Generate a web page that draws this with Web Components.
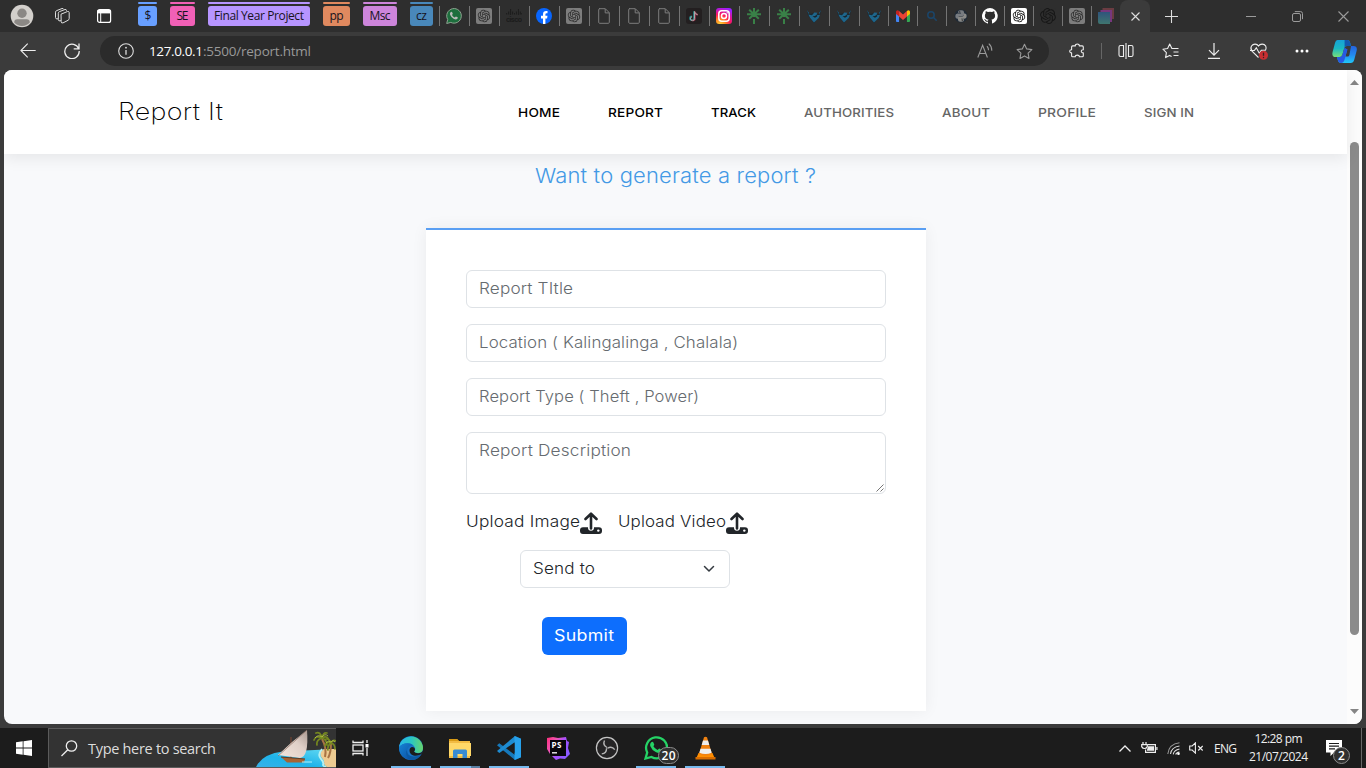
<!DOCTYPE html>
<html lang="en">
<head>
<meta charset="utf-8">
<title>Report It</title>
<style>
html,body{margin:0;height:100%;overflow:hidden;background:#3b3b3b}
body{font-family:"Open Sans","Noto Sans",sans-serif}
</style>
</head>
<body>
<desktop-screen></desktop-screen>
<script>
const KNOT="M22.2819 9.8211a5.9847 5.9847 0 0 0-.5157-4.9108 6.0462 6.0462 0 0 0-6.5098-2.9A6.0651 6.0651 0 0 0 4.9807 4.1818a5.9847 5.9847 0 0 0-3.9977 2.9 6.0462 6.0462 0 0 0 .7427 7.0966 5.98 5.98 0 0 0 .511 4.9107 6.051 6.051 0 0 0 6.5146 2.9001A5.9847 5.9847 0 0 0 13.2599 24a6.0557 6.0557 0 0 0 5.7718-4.2058 5.9894 5.9894 0 0 0 3.9977-2.9001 6.0557 6.0557 0 0 0-.7475-7.0729zm-9.022 12.6081a4.4755 4.4755 0 0 1-2.8764-1.0408l.1419-.0804 4.7783-2.7582a.7948.7948 0 0 0 .3927-.6813v-6.7369l2.02 1.1686a.071.071 0 0 1 .038.052v5.5826a4.504 4.504 0 0 1-4.4945 4.4944zm-9.6607-4.1254a4.4708 4.4708 0 0 1-.5346-3.0137l.142.0852 4.783 2.7582a.7712.7712 0 0 0 .7806 0l5.8428-3.3685v2.3324a.0804.0804 0 0 1-.0332.0615L9.74 19.9502a4.4992 4.4992 0 0 1-6.1408-1.6464zM2.3408 7.8956a4.485 4.485 0 0 1 2.3655-1.9728V11.6a.7664.7664 0 0 0 .3879.6765l5.8144 3.3543-2.0201 1.1685a.0757.0757 0 0 1-.071 0l-4.8303-2.7865A4.504 4.504 0 0 1 2.3408 7.872zm16.5963 3.8558L13.1038 8.364 15.1192 7.2a.0757.0757 0 0 1 .071 0l4.8303 2.7913a4.4944 4.4944 0 0 1-.6765 8.1042v-5.6772a.79.79 0 0 0-.407-.667zm2.0107-3.0231l-.142-.0852-4.7735-2.7818a.7759.7759 0 0 0-.7854 0L9.409 9.2297V6.8974a.0662.0662 0 0 1 .0284-.0615l4.8303-2.7866a4.4992 4.4992 0 0 1 6.6802 4.66zM8.3065 12.863l-2.02-1.1638a.0804.0804 0 0 1-.038-.0567V6.0742a4.4992 4.4992 0 0 1 7.3757-3.4537l-.142.0805L8.704 5.459a.7948.7948 0 0 0-.3927.6813zm1.0976-2.3654l2.602-1.4998 2.6069 1.4998v2.9994l-2.5974 1.4997-2.6067-1.4997Z";
const gpt=(bg,fg,k=.52)=>[16,16,`<rect width="16" height="16" rx="2" fill="${bg}"/><path transform="translate(${8-12*k} ${8-12*k}) scale(${k})" fill="${fg}" d="${KNOT}"/>`];
const doc=[12,16,'<path d="M1 .7h6.3l4 4v9.6a1 1 0 0 1-1 1H1.7a1 1 0 0 1-1-1V1.7a1 1 0 0 1 1-1zM7.2.9v4h4" fill="none" stroke="#7d7d7d"/>'];
const tree=[14,16,'<g stroke="#398047" stroke-width="2" fill="none"><path d="M7 0v9M0 6.300h14M2.200 1.800l9.600 9M11.800 1.800l-9.600 9M7 11v5"/></g>'];
const fox=[16,16,'<path d="M1 1.500L3 6l5-1 5 1 2-4.500-1 6-6 7.500-6-7.500z" fill="#1b2932"/><path d="M1 2l2 3-.5 1zM15 2l-2 3 .5 1z" fill="#1d668c"/><path d="M2.300 6.500L6 7.300l2.300-2.800 3.200.3-1 1.500 1 .9 2.500-.5-1.300 3.200L8 14.500 4.200 10z" fill="#1d668c"/><path d="M6.500 8.300l2.500-.2 1.500-1.400.8 1.600-2.300 1.500z" fill="#17242c"/>'];
const S='fill="none" stroke="currentColor" stroke-width="1.1"';
const ICONS={
avatar:[24,24,'<circle cx="12" cy="12" r="11.300" fill="#d3d0cc"/><circle cx="12" cy="9.300" r="4.700" fill="#8b8885"/><path d="M4.200 18.500q0-3.200 3.200-3.200h9.200q3.200 0 3.200 3.200a10.500 10.500 0 0 1-15.600 0z" fill="#8b8885"/>'],
spaces:[18,18,`<g ${S} stroke-linejoin="round" style="stroke-width:1"><path d="M8 7.200l6.500-2.700q1.500-.4 1.700 1v6q0 1.300-1.200 1.800L10 15.900q-1.800.5-1.800-1.200z"/><path d="M8 13.700q-2.700.9-2.700-1V6.300q0-1.200 1.200-1.700L12 2.500q1.400-.4 1.600 1.200"/><path d="M5.200 11.800Q2.500 12.500 2.500 10.500V5.200Q2.500 4 3.700 3.600L9 1.500q1.300-.3 1.700.8"/></g>`],
tabs:[16,16,`<rect x="1.600" y="1.600" width="13" height="12.800" rx="2" fill="none" stroke="#fff" stroke-width="1.200"/><path d="M1.500 2h13v3.400h-13z" fill="#fff"/><path d="M4.700 5v9" stroke="#fff"/>`],
wa:[16,16,'<path d="M.7 15.500l1-4A7.300 7.300 0 1 1 4.800 14.400z" fill="#1d6e3d" stroke="#8fa391" stroke-width="1"/><path d="M4.500 4.200q1.300-1 1.800.4l.5 1.200-.8 1.100q.8 1.700 2.700 2.600l1.200-1.100 1.700.8q.7.600-.3 1.600-1.300 1.200-3.700-.1-2.500-1.400-3.500-3.900-.5-1.600.4-2.600z" fill="#b9bab9"/>'],
gptg:gpt('#7d7d7d','#2c2c2c'),gptw:gpt('#fff','#111'),gptd:gpt('#2e2e2e','#171717',.66),
cisco:[16,14,'<g stroke="#1c1c1c" stroke-width="1"><path d="M.7 4v1.500M2.700 2.500v3M4.600 0v6M6.600 2.500v3M8.500 4v1.500M10.400 2.500v3M12.400 0v6M14.300 2.500v3M15.800 4v1.500"/></g><text x="0" y="12.500" textLength="16" font-family="Inter" font-size="7" font-weight="700" fill="#1c1c1c">cisco</text>'],
fb:[16,16,'<circle cx="8" cy="8" r="8" fill="#0866ff"/><path d="M7 16v-5.500H5V7.700h2V6.300Q7 3 10.200 3h1.300v2.300h-1Q9.400 5.300 9.400 6.500v1.200h2.100l-.4 2.800H9.400V16z" fill="#fff"/>'],
doc,tree,fox,
tiktok:[16,16,'<rect width="16" height="16" rx="3" fill="#231f20"/><g fill="none" stroke-width="1.600"><path d="M8 3.200v7.200a2 2 0 1 1-2.200-2.200M8 3.500q.4 2.600 3 2.900" stroke="#2c8e91"/><path d="M9 3.500v7.500a2 2 0 0 1-3.200 1M9 4q.5 2.500 3 2.700" stroke="#99334b"/><path d="M8.500 3.300v7.400a2 2 0 1 1-2.400-2M8.600 3.800q.4 2.500 2.900 2.800" stroke="#a9a9a9" stroke-width="1"/></g>'],
ig:[16,16,'<defs><radialGradient id="a" cx=".25" cy="1.050" r="1.100"><stop offset="0" stop-color="#ffda3c"/><stop offset=".3" stop-color="#ff8a20"/><stop offset=".6" stop-color="#ff1560"/><stop offset="1" stop-color="#9c1dff"/></radialGradient></defs><rect width="16" height="16" rx="3" fill="url(#a)"/><g fill="none" stroke="#fff" stroke-width="1.500"><rect x="2.800" y="2.800" width="10.400" height="10.400" rx="3"/><circle cx="8" cy="8" r="2.500"/></g><circle cx="11.200" cy="4.800" r=".7" fill="#fff"/>'],
gmail:[14,12,'<g transform="scale(.875 1)"><path d="M0 2h3.500v10H1a1 1 0 0 1-1-1z" fill="#4285f4"/><path d="M12.500 2H16v9a1 1 0 0 1-1 1h-2.500z" fill="#34a853"/><path d="M12.500 1Q14 0 15 .4q1 .4 1 1.600v2L12.500 6.500z" fill="#fbbc04"/><path d="M0 4V2Q0 .8 1 .4 2 0 3.500 1v5.500z" fill="#c5221f"/><path d="M3.500 1L8 4.500 12.500 1v5.500L8 10 3.500 6.500z" fill="#ea4335"/></g>'],
srch:[10,10,'<g fill="none" stroke="#1b4569" stroke-width="1.500"><circle cx="4" cy="4" r="3.200"/><path d="M6.300 6.300L9.700 9.700"/></g>'],
py:[14,14,'<g transform="scale(.875)"><circle cx="8" cy="8" r="7.500" fill="#1f2a36"/><path d="M4.500 4Q4.500 1.500 7 1.500h2q2.500 0 2.500 2.500v2.500Q11.500 8 9.500 8h-3Q5 8 5 9.800V11H3.500q-2 0-2-3t2.500-3h4v-.7H4.500z" fill="#777b80"/><path d="M11.500 12q0 2.500-2.500 2.500H7Q4.500 14.500 4.500 12V9.800Q4.500 8.500 6.500 8.500h3q1.900 0 1.900-2V5h1.100q2 0 2 3t-2.500 3H8v.7h3.500z" fill="#8a8a88"/><circle cx="6.500" cy="3.200" r=".7" fill="#222"/><circle cx="9.500" cy="12.800" r=".7" fill="#222"/></g>'],
gh:[16,16,'<path fill="#fff" d="M8 0a8 8 0 0 0-2.500 15.600c.4.100.5-.2.500-.4v-1.500c-2.200.5-2.700-1-2.700-1-.4-.900-.9-1.200-.9-1.200-.7-.5.100-.5.100-.5.800.1 1.200.8 1.200.8.700 1.300 1.900.9 2.300.7.100-.5.300-.9.500-1.100-1.800-.2-3.600-.9-3.600-4 0-.9.300-1.600.8-2.100-.1-.2-.4-1 .1-2.100 0 0 .7-.2 2.200.8a7.500 7.500 0 0 1 4 0c1.500-1 2.200-.8 2.200-.8.500 1.100.2 1.900.1 2.100.5.500.8 1.300.8 2.100 0 3.100-1.900 3.800-3.700 4 .3.300.6.800.6 1.500v2.200c0 .2.100.5.500.4A8 8 0 0 0 8 0z"/>'],
cube:[16,16,'<path d="M4.500 0H16v11h-3V4H4.500z" fill="#6b3c42"/><path d="M2.500 2H14v12h-2V5H2.500z" fill="#76377d"/><defs><linearGradient id="c" x1="0" y1="0" x2="0" y2="1"><stop stop-color="#2f547c"/><stop offset="1" stop-color="#3f766f"/></linearGradient></defs><path d="M0 4h12v12H2q-2 0-2-2z" fill="url(#c)"/>'],
x9:[9,9,`<path d="M.5.5l8 8M8.500.5l-8 8" ${S}/>`],
x11:[11,11,`<path d="M.5.5l10 10M10.500.5l-10 10" ${S}/>`],
plus:[13,13,`<path d="M6.500 0v13M0 6.500h13" ${S}/>`],
min:[10,10,`<path d="M0 5.500h10" ${S} style="stroke-width:1"/>`],
restore:[11,11,`<g ${S} style="stroke-width:1"><rect x=".5" y="2.500" width="8" height="8" rx="1.500"/><path d="M2.800.6h5.700q2 0 2 2v5.600"/></g>`],
back:[17,16,`<path d="M15.700 7.500H.9M7.700.700L.9 7.500l6.800 6.800" ${S}/>`],
reload:[16,16,`<path d="M14.800 6A7.200 7.200 0 1 0 15.200 8M15 .5v5.300H9.700" ${S} style="stroke-width:1.300"/>`],
info:[16,16,`<circle cx="8" cy="8" r="7.300" ${S}/><path d="M8 7v4.800" stroke="currentColor" stroke-width="1.300"/><circle cx="8" cy="4.700" r=".9" fill="currentColor"/>`],
aloud:[16,16,`<path d="M.8 14.500L5.600 2.200l4.800 12.300M2.300 10.500h6.600M10 3.200q1.500 1.700 1.500 4M11.800.7q3.100 2.800 3 7" ${S}/>`],
star:[17,17,`<path d="M8.500 1.200l2.200 4.700 5.200.7-3.800 3.600.9 5.200-4.500-2.500L4 15.400l.9-5.200L1.100 6.600l5.200-.7z" ${S} stroke-linejoin="round"/>`],
puzzle:[16,16,`<path d="M3.300 2.600H6C5.700.100 10.300.100 10 2.600h3q1 0 1 1v2.800c-2.700-.2-2.700 3.400 0 3.200v2.900q0 1-1 1H10c.3-2.200-4.300-2.200-4 0H3.300q-1 0-1-1V9.600C-.2 9.800-.2 6.200 2.300 6.400V3.600q0-1 1-1z" transform="translate(.3 .3)" ${S} stroke-linejoin="round"/>`],
split:[16,16,`<path d="M5.500 2.500H2.600Q1 2.500 1 4.100v7.800q0 1.600 1.600 1.600h2.900zM10.500 2.500h2.900q1.600 0 1.600 1.600v7.800q0 1.600-1.600 1.600h-2.900zM8 0v16" ${S}/>`],
favs:[17,16,`<path d="M10.800 5.500h5.700M11.500 9h5M11.500 12.500h5M10.800 5.500H9.900L7.700 1 5.600 5.500l-4.700.7 3.500 3.400-.8 5 4-2.200 2 1.100" ${S} stroke-linejoin="round"/>`],
down:[14,16,`<path d="M7 0v11.700M2 7.200l5 5 5-5M1 15.300h12" ${S} style="stroke-width:1.200"/>`],
heart:[19,17,`<path d="M9.500 14.500L3 8.200Q1 5.500 2.500 3C4.500.200 8 .700 9.500 3 11 .700 15 .200 16.700 3q.9 2-.1 4M1 7.500h4.300L7.300 4.800l3 5.500 2-3h4.500" ${S}/><circle cx="14.500" cy="12.300" r="4.500" fill="#c72f32"/><path d="M14.500 9.600v3.200" stroke="#3b2020" stroke-width="1.300"/><circle cx="14.500" cy="14.500" r=".7" fill="#3b2020"/>`],
dots:[14,4,'<g fill="#fff"><circle cx="2" cy="2" r="1.500"/><circle cx="7" cy="2" r="1.500"/><circle cx="12" cy="2" r="1.500"/></g>'],
copilot:[25,23,'<defs><linearGradient id="l" x1="0" y1="0" x2="0" y2="1"><stop stop-color="#16a2d8"/><stop offset=".5" stop-color="#1bb8c3"/><stop offset="1" stop-color="#77df77"/></linearGradient><linearGradient id="r" x1="0" y1="0" x2="0" y2="1"><stop stop-color="#2464df"/><stop offset=".5" stop-color="#2488ef"/><stop offset="1" stop-color="#20c7f8"/></linearGradient></defs><path d="M5.500 0h10q2 0 2.700 3l.6 3h-4q-2 0-2.600 2.300l-1.800 6.200q-.9 2.500-3 2.500H3.500Q-.5 17 .6 12L3 3Q3.700 0 5.500 0z" fill="url(#l)"/><path d="M12.600 0h3q2 0 2.700 3l.6 3h-4q-1.500 0-2.300 1.500z" fill="#1357ae"/><path d="M19 6h2.500q4 0 3.200 4.500l-2.400 9Q21.500 23 18.500 23H9q-2.500 0-3.200-3L5 17h3q2 0 2.500-2.300L12.600 8l2.800 1.500-2 7h2.300q1.300 0 1.700-1.500z" fill="url(#r)"/><path d="M5 17h3.500q1.400-.3 2-2.300L12.600 8l2.800 1.500-3 10.500q-.8 3-3.400 3-2.500 0-3.200-3z" fill="#2759e2"/>'],
up:[9,5,'<path d="M0 5L4.500 0 9 5z" fill="#858585"/>'],dn:[9,5,'<path d="M0 0h9L4.500 5z" fill="#858585"/>'],
upload:[22,22,'<path d="M3 15.200h5v.6a3 3 0 0 0 6 0v-.6h5a3 3 0 0 1 3 3v.8a3 3 0 0 1-3 3H3a3 3 0 0 1-3-3v-.8a3 3 0 0 1 3-3z" fill="#212529"/><circle cx="18.300" cy="18.600" r="1.200" fill="#fff"/><path d="M11 16.500V2.500M5.500 7L11 1.700 16.500 7" fill="none" stroke="#212529" stroke-width="2.600" stroke-linecap="round" stroke-linejoin="round"/>'],
chev:[12,8,'<path d="M1.500 1.500L6 6l4.500-4.500" fill="none" stroke="#343a40" stroke-width="1.500" stroke-linecap="round" stroke-linejoin="round"/>'],
grip:[9,9,'<path d="M.5 7.500l7-7M4.500 7.500l3-3" stroke="#666" stroke-width=".9"/>'],
win:[16,16,'<path d="M0 2.200L6.700 1.300v6.200H0zM7.500 1.200L16 0v7.500H7.500zM0 8.400h6.700v6.300L0 13.800zM7.500 8.400H16V16l-8.500-1.200z" fill="#fff"/>'],
find:[17,17,'<g fill="none" stroke="#eee" stroke-width="1.300"><circle cx="10.500" cy="6" r="5.200"/><path d="M6.800 9.700L.5 16"/></g>'],
task:[17,16,'<g fill="none" stroke="#eee" stroke-width="1.300"><path d="M1 .5v2h10v-2M1 15.500v-2h10v2"/><rect x="1" y="5" width="10" height="6"/><path d="M15 0v3M15 8v8"/></g><path d="M13.500 4h3v3.500h-3z" fill="#fff"/>'],
beach:[80,40,'<defs><linearGradient id="s" x1="0" x2="1" y1="1" y2="0"><stop stop-color="#3bb0e8"/><stop offset=".4" stop-color="#1fb4ea"/><stop offset="1" stop-color="#68dcf2"/></linearGradient><linearGradient id="t" x1="0" y1="1" x2="1" y2="0"><stop stop-color="#f5e6dd"/><stop offset=".6" stop-color="#dfcfc7"/><stop offset="1" stop-color="#a99890"/></linearGradient></defs><path d="M0 39Q6 26 27 23.500L80 21v19H0z" fill="url(#s)"/><path d="M80 21H68q-6 4-2 9 3 3 2 6 1 2 3 3h9z" fill="#edcb91"/><path d="M66 21q-5 6-1 10 3 3 2 6 0 1 3 2" fill="none" stroke="#b5f0f2" stroke-width="1.800"/><path d="M35 9v22" stroke="#714332" stroke-width="1.200"/><path d="M51 2Q53 29 44 30L22 27Q35 14 51 2z" fill="url(#t)"/><path d="M22 28L51 2" stroke="#8a6c60" stroke-width=".7"/><path d="M25 29l24 2-1 3.500H31z" fill="#a76434"/><path d="M25 29l24 2" stroke="#603b24" stroke-width="1.200"/><path d="M46 34h10" stroke="#b3f1fa"/><path d="M66 11q5 9 3 18M75 15q0 10-3 15" fill="none" stroke="#a87444" stroke-width="2"/><g fill="none" stroke="#75871f" stroke-width="1.700" stroke-linecap="round"><path d="M66 10Q60 7 58 12M66 10q-6 2-5 7M66 10Q64 3 60 5M66 10q1-6 5-5M66 10q5-3 7 2M66 10q5 2 5 7M75 15q-5-2-6 3M75 15q-4 3-3 7M75 15q-2-5-5-4M75 15q2-4 5-2M75 15q4 1 4 6"/></g><g fill="none" stroke="#b9c84f" stroke-width=".8"><path d="M66 9q-4-3-7 1M66 9q3-4 6-1M75 14q2-3 4 0M75 14q-3-2-5 1"/></g>'],
edge:[24,24,'<defs><linearGradient id="a"><stop stop-color="#29b7e8"/><stop offset=".5" stop-color="#29c6c4"/><stop offset="1" stop-color="#67d46c"/></linearGradient><linearGradient id="b" y2="1"><stop stop-color="#1683d5"/><stop offset="1" stop-color="#0b4da1"/></linearGradient></defs><circle cx="12" cy="12" r="12" fill="#1872c6"/><path d="M.1 11A12 12 0 0 1 24 12q0 5-5 5-3 0-4-1.300 2-1.700.7-4.500-2-4-7.200-4Q3 7.200.1 11z" fill="url(#a)"/><path d="M.1 11Q3 7.200 8.500 7.200q3.500 0 5.500 2Q9 9.500 8 15q0 6 6 8.700A12 12 0 0 1 .1 11z" fill="url(#b)"/><path d="M8 14q0 6 6.500 6.500 4.500.2 8.200-2.500Q19 24 13 24 7 22 7 16z" fill="#0c59a4"/><path d="M15 15.500q1 2 4.500 1.800 2.500 0 4.500-2.300L22.500 18q-4 2.500-8 1.500-4-1.500-4-5 0-3 2.500-3.500 3 0 3 2.500 0 1.100-1 2z" fill="#1c1c1c"/>'],
folder:[22,20,'<path d="M0 3q0-2 1-2h7l2 2h11v17H0z" fill="#f2bb43"/><path d="M0 5h22v13H0z" fill="#ffd868"/><path d="M0 1h8l2 2H0z" fill="#d99b15"/><path d="M4 20v-7q0-1.500 1.500-1.500h11Q18 11.500 18 13v7h-4.500v-4h-5v4z" fill="#398bd1"/>'],
code:[24,24,'<path d="M18 0l6 2.800v18.400L18 24 0 9.200 2.300 7.300 18 19z" fill="#1679bb"/><path d="M0 15L18 0v6L2.300 17z" fill="#1e8cd2"/><path d="M17.500 0L24 2.800v18.400L17.500 24z" fill="#27a1eb"/><path d="M17.500 7v10l-6.500-5z" fill="#1c1c1c"/>'],
ps:[24,24,'<defs><linearGradient id="p" x2="1" y2=".6"><stop stop-color="#ff2e7a"/><stop offset=".35" stop-color="#f055b5"/><stop offset=".6" stop-color="#a94fff"/><stop offset="1" stop-color="#8a5cff"/></linearGradient></defs><path d="M1 2l6-1 5 1 8-1 1 4 2 1-1 6 2 6-5 5-5-.5-4 1.500-6-6-3-5z" fill="url(#p)"/><path d="M4 4h16v16H4z" fill="#08070b"/><path d="M6 16.800h5" stroke="#eee" stroke-width="1.400"/><text x="5.500" y="12" textLength="10" font-family="Open Sans" font-size="8" font-weight="700" fill="#fff">PS</text>'],
obs:[24,24,'<circle cx="12" cy="12" r="10.600" fill="#252425" stroke="#c4c4c4" stroke-width="1.200"/><g fill="none" stroke="#b5b5b5" stroke-width="1.400"><path d="M12 11.500Q7.500 9 9.500 4.500"/><path d="M12 11.500Q7.500 9 9.500 4.500" transform="rotate(120 12 12)"/><path d="M12 11.500Q7.500 9 9.500 4.500" transform="rotate(240 12 12)"/></g>'],
wabig:[24,24,'<path d="M1.500 22.500l1.700-6A10.500 10.500 0 1 1 7.500 21z" fill="#1c1c1c" stroke="#25d366" stroke-width="2.300"/><path d="M7 6.500q1.700-1.400 2.500.2l.8 2-.9 1.600q1.400 2.600 4.100 3.600l1.700-1.500 2.600 1.300q.6.800-.4 2-1.900 2-5.700.2-4-2-5.500-6-.5-2.200.8-3.400z" fill="#25d366"/>'],
vlc:[21,24,'<path d="M3.500 17h14l2.500 6H1z" fill="#ff8e00"/><path d="M.5 21h20v2.500H.5z" fill="#d86c00"/><path d="M9 1.200q1.500-1 3 0L17 18q-6.500 3.500-13 0z" fill="#f18211"/><path d="M8 4.500h5l1.300 4.500H6.700zM5.500 12.800h10l1.200 4q-6.200 2.500-12.400 0z" fill="#eee"/>'],
chup:[12,7,'<path d="M.5 6.500L6 1l5.500 5.500" fill="none" stroke="#eee" stroke-width="1.300"/>'],
batt:[17,12,'<g fill="none" stroke="#eee" stroke-width="1.200"><path d="M7 2.600h7.400v7.800H4.600V7.500"/><path d="M15.900 5v3M2 0v2.500M5 0v2.500M.7 2.600h5.600v2q-1 1.900-2.800 1.900T.7 4.600z"/></g><path d="M7.200 4.200H13v4.600H6V7.500z" fill="#eee"/>'],
wifi:[13,13,'<g fill="none" stroke="#ddd" stroke-width="1.100"><path d="M.8 12Q2 2 12.500.8" stroke="#999"/><path d="M3.500 12q1-7 9-8"/><path d="M6.200 12.300Q7 8 12.500 7"/><path d="M8.700 12.500Q9.300 10.300 12.500 10"/></g><circle cx="11.500" cy="11.700" r="1.300" fill="#fff"/>'],
vol:[15,12,'<path d="M.7 4h2.500L6.400.900v10.200L3.200 8H.7z" fill="none" stroke="#eee" stroke-width="1.100"/><path d="M9.200 4l4.500 4.500M13.700 4L9.200 8.500" stroke="#eee" stroke-width="1.100"/>'],
note:[16,16,'<path d="M0 0h16v12.500H8L4.500 16v-3.500H0z" fill="#fff"/><path d="M3 3.500h10M3 6.200h10M3 8.900h6" stroke="#1c1c1c" stroke-width="1.200"/>']
};
function define(name,html,init){
  const t=document.createElement('template');t.innerHTML=html;
  customElements.define(name,class extends HTMLElement{
    constructor(){super();this.attachShadow({mode:'open'}).append(t.content.cloneNode(true))}
    connectedCallback(){if(init)init(this,this.shadowRoot)}
  });
}
/* vector icon chosen by name */
define('ui-icon','<style>:host{display:inline-flex;flex:none}svg{display:block}</style><span></span>',(h,r)=>{
  const [w,ht,b]=ICONS[h.getAttribute('name')];
  r.querySelector('span').innerHTML=`<svg width="${w}" height="${ht}" viewBox="0 0 ${w} ${ht}">${b}</svg>`;
});
/* single line of text set to a given measure */
define('fit-text','<style>:host{display:block;flex:none;white-space:nowrap}span{display:inline-block;transform-origin:0 50%;vertical-align:top}</style><span></span>',(h,r)=>{
  const s=r.querySelector('span'),w=+h.getAttribute('w'),t=h.getAttribute('text');
  s.textContent=t;
  const n=s.getBoundingClientRect().width,k=h.hasAttribute('plain')?1:Math.pow(w/n,.85);
  s.style.letterSpacing=(w/k-n)/Math.max(1,t.length-1)+'px';
  if(k!==1)s.style.transform=`scaleX(${k})`;
  h.style.width=w+'px';
});
define('tab-group',`<style>:host{display:block;height:26px;padding-top:2px;box-sizing:border-box;width:var(--w);color:#16131d;font-size:12px}
i{display:block;height:2px;background:var(--c);margin-bottom:2px;border-radius:1px}div{height:20px;border-radius:3px;background:var(--c);display:flex;align-items:center;justify-content:center;padding-bottom:1px;box-sizing:border-box}</style><i></i><div><slot></slot></div>`);
define('pinned-tab','<style>:host{display:flex;align-items:center;justify-content:center;height:20px;width:29px;border-left:1px solid #747474;box-sizing:border-box;flex:none}:host([wide]){width:30px;padding-right:1px}</style><slot></slot>');
define('window-cell','<style>:host{display:flex;align-items:center;justify-content:center;flex:none;height:100%;width:var(--w,44px)}</style><slot></slot>');
const tabs=['wa','gptg','cisco','fb','gptg','doc','doc','doc','tiktok','ig','tree','tree','fox','fox','fox','gmail','srch','py','gh','gptw','gptd','gptg','cube'];
const groups=[['$',19,'#689fff',13,6],['SE',25,'#f160b6',13,12],['Final Year Project',102,'#b795ff',13,90],['pp',27,'#e0895f',13,14],['Msc',34,'#cd85db',13,21],['cz',23,'#4988ba',6,11]];
define('tab-strip',`<style>:host{display:flex;height:32px;background:#2e2e2e;color:#ddd}
.groups{display:flex;flex:none}.pins{display:flex;padding-top:6px;flex:none}
.active{width:30px;flex:none;height:32px;background:#3b3b3b;border-radius:8px 8px 0 0;display:flex;align-items:center;justify-content:center}
.controls{display:flex;margin-left:auto;color:#9b9b9b}</style>
<window-cell><ui-icon name="avatar"></ui-icon></window-cell><window-cell style="--w:36px"><ui-icon name="spaces"></ui-icon></window-cell><window-cell style="--w:48px"><ui-icon name="tabs"></ui-icon></window-cell>
<div class="groups" style="margin-left:10px">${groups.map(([t,w,c,g,m])=>`<tab-group style="--w:${w}px;--c:${c};margin-right:${g}px"><fit-text plain w="${m}" text="${t}"></fit-text></tab-group>`).join('')}</div>
<div class="pins">${tabs.map((t,i)=>`<pinned-tab${i<14?' wide':''}><ui-icon name="${t}"></ui-icon></pinned-tab>`).join('')}</div>
<div class="active"><ui-icon name="x9"></ui-icon></div><window-cell style="--w:43px"><ui-icon name="plus"></ui-icon></window-cell>
<div class="controls"><window-cell style="--w:46px"><ui-icon name="min"></ui-icon></window-cell><window-cell style="--w:46px"><ui-icon name="restore"></ui-icon></window-cell><window-cell style="--w:46px"><ui-icon name="x11"></ui-icon></window-cell></div>`);
define('address-bar',`<style>:host{display:flex;align-items:center;width:949px;height:30px;background:#2b2b2b;border-radius:15px;box-sizing:border-box;padding:0 5px 0 15px;margin:0 6px;font-size:13.500px;color:#999;flex:none}
.host{color:#fff;margin-left:12px}.right{margin-left:auto;display:flex}</style>
<window-cell style="--w:22px;color:#ddd"><ui-icon name="info"></ui-icon></window-cell><fit-text class="host" plain w="54" text="127.0.0.1"></fit-text><fit-text plain w="108" text=":5500/report.html"></fit-text>
<div class="right"><window-cell style="--w:39px"><ui-icon name="aloud"></ui-icon></window-cell><window-cell style="--w:40px"><ui-icon name="star"></ui-icon></window-cell></div>`);
define('tool-bar',`<style>:host{display:flex;align-items:center;height:38px;padding-left:6px;box-sizing:border-box;background:#3b3b3b;color:#eee}i{width:1px;height:16px;background:#666;margin:0 2px 0 2px}</style>
<window-cell><ui-icon name="back"></ui-icon></window-cell><window-cell><ui-icon name="reload"></ui-icon></window-cell><address-bar></address-bar>
<window-cell><ui-icon name="puzzle"></ui-icon></window-cell><i></i><window-cell><ui-icon name="split"></ui-icon></window-cell><window-cell><ui-icon name="favs"></ui-icon></window-cell><window-cell><ui-icon name="down"></ui-icon></window-cell><window-cell><ui-icon name="heart"></ui-icon></window-cell><window-cell><ui-icon name="dots"></ui-icon></window-cell><window-cell style="--w:40px"><ui-icon name="copilot"></ui-icon></window-cell>`);
const nav=[['HOME',42,1],['REPORT',55,1],['TRACK',45,1],['AUTHORITIES',90],['ABOUT',48],['PROFILE',58],['SIGN IN',50]];
define('site-header',`<style>:host{display:flex;align-items:center;justify-content:space-between;height:84px;box-sizing:border-box;padding:0 153px 0 114px;background:#fff;box-shadow:0 4px 15px rgba(0,0,0,.08);position:relative;color:#000}
.brand{font-size:23.500px;font-weight:250;line-height:32px}nav{display:flex;gap:48px;font-size:12.300px;font-weight:500;line-height:20px;padding-top:2px}nav .dim{color:#666}</style>
<fit-text class="brand" w="105" text="Report It"></fit-text><nav>${nav.map(([t,w,a])=>`<fit-text class="${a?'on':'dim'}" w="${w}" text="${t}"></fit-text>`).join('')}</nav>`);
define('form-field','<style>:host{display:flex;box-sizing:border-box;height:38px;border:1px solid #dee2e6;border-radius:6px;padding:6px 12px;color:#666b70;background:#fff;justify-content:space-between}:host([area]){height:62px}.e{align-self:flex-end;margin:0 -12px -6px 0;line-height:0}</style><slot></slot><span class="e"><slot name="end"></slot></span>');
define('report-form',`<style>:host{display:flex;flex-direction:column;box-sizing:border-box;width:500px;height:483px;border-top:2px solid #5a9ff3;padding:40px;background:#fff;box-shadow:0 0 15px rgba(0,0,0,.06);gap:16px;color:#212529;font-size:15.400px;font-weight:300;line-height:24px}
.row{display:flex;height:24px;margin-top:0}.row ui-icon{margin:2px 16px 0 0}
.select{width:210px;margin:0 0 0 54px;color:#212529}.select ui-icon{margin:0 14px 14px 0}
button{font:400 15.400px/24px Inter,sans-serif;color:#fff;background:#0d6efd;border:0;border-radius:6px;width:85px;height:38px;padding:0 12.500px;margin:13px 0 0 76px;text-align:left}</style>
<form-field><fit-text w="94" text="Report TItle"></fit-text></form-field>
<form-field><fit-text w="259" text="Location ( Kalingalinga , Chalala)"></fit-text></form-field>
<form-field><fit-text w="220" text="Report Type ( Theft , Power)"></fit-text></form-field>
<form-field area><fit-text w="152" text="Report Description"></fit-text><ui-icon slot="end" name="grip"></ui-icon></form-field>
<div class="row"><fit-text w="114" text="Upload Image"></fit-text><ui-icon name="upload"></ui-icon><fit-text w="108" text="Upload Video"></fit-text><ui-icon name="upload"></ui-icon></div>
<form-field class="select"><fit-text w="62" text="Send to"></fit-text><ui-icon slot="end" name="chev"></ui-icon></form-field>
<button><fit-text w="60" text="Submit"></fit-text></button>`);
define('scroll-bar',`<style>:host{display:flex;flex-direction:column;align-items:center;width:15px;box-sizing:border-box;padding:10px 0 10px;background:#fcfcfc}i{width:9px;height:493px;border-radius:5px;background:#8b8b8b;margin-top:57px}.b{margin-top:auto}</style><ui-icon name="up"></ui-icon><i></i><ui-icon class="b" name="dn"></ui-icon>`);
define('web-page',`<style>:host{display:flex;height:654px;margin:0 4px 4px;border-radius:8px;overflow:hidden;background:#f8f9fb;font-family:Inter,sans-serif}.main{width:1343px;display:flex;flex-direction:column;align-items:center}site-header{align-self:stretch}
.title{color:#4499e5;font-size:20.300px;font-weight:300;line-height:28px;margin:8px 0 38px}</style>
<div class="main"><site-header></site-header><fit-text class="title" w="281" text="Want to generate a report ?"></fit-text><report-form></report-form></div><scroll-bar></scroll-bar>`);
define('task-app',`<style>:host{display:flex;position:relative;width:49px;height:40px;padding-right:1px;box-sizing:border-box;align-items:center;justify-content:center;flex:none}i{display:none;position:absolute;bottom:0;left:4px;width:40px;height:2px;background:#76b9ed}:host([open]) i{display:block}:host([multi]) i{background:linear-gradient(90deg,#76b9ed 31px,#597fa3 31px)}</style><slot></slot><i></i>`);
define('count-badge','<style>:host{position:absolute;display:flex;align-items:center;justify-content:center;height:17px;min-width:17px;box-sizing:border-box;border:1px solid #8b8b8b;border-radius:9px;background:#303030;color:#fff;font-size:12px;font-weight:600;line-height:14px}</style><slot></slot>');
define('task-bar',`<style>:host{display:flex;height:40px;background:#1c1c1c;color:#eee;font-size:12px}
.search{display:flex;align-items:center;width:288px;box-sizing:border-box;border:1px solid #5b5b5b;border-right:0;background:#333;font-size:14.500px;color:#ddd;padding-left:12px;overflow:hidden;flex:none}.search fit-text{margin-left:10px}.search .pic{margin-left:auto}
.tray{margin-left:auto;display:flex;align-items:center}.clock{width:59px;display:flex;flex-direction:column;align-items:center;line-height:18px;margin:0 10px 0 12px}
.note{position:relative}.edge{width:1px;height:40px;background:#666;margin:0 4px 0 11px}</style>
<window-cell style="--w:48px"><ui-icon name="win"></ui-icon></window-cell>
<div class="search"><ui-icon name="find"></ui-icon><fit-text plain w="128" text="Type here to search"></fit-text><ui-icon class="pic" name="beach"></ui-icon></div>
<window-cell style="--w:48px"><ui-icon name="task"></ui-icon></window-cell><div style="width:3px"></div>
<task-app open><ui-icon name="edge"></ui-icon></task-app><task-app open multi><ui-icon name="folder"></ui-icon></task-app><task-app open><ui-icon name="code"></ui-icon></task-app><task-app><ui-icon name="ps"></ui-icon></task-app><task-app><ui-icon name="obs"></ui-icon></task-app>
<task-app open><ui-icon name="wabig"></ui-icon><count-badge style="width:21px;left:26px;top:19px"><fit-text plain w="14" text="20"></fit-text></count-badge></task-app><task-app open><ui-icon name="vlc"></ui-icon></task-app>
<div class="tray"><window-cell style="--w:24px"><ui-icon name="chup"></ui-icon></window-cell><window-cell style="--w:24px"><ui-icon name="batt"></ui-icon></window-cell><window-cell style="--w:25px"><ui-icon name="wifi"></ui-icon></window-cell><window-cell style="--w:20px"><ui-icon name="vol"></ui-icon></window-cell><fit-text plain style="margin-left:8px" w="23" text="ENG"></fit-text>
<div class="clock"><fit-text plain w="48" text="12:28 pm"></fit-text><fit-text plain w="59" text="21/07/2024"></fit-text></div>
<window-cell class="note" style="--w:32px"><ui-icon name="note"></ui-icon><count-badge style="left:15px;top:19px">2</count-badge></window-cell><i class="edge"></i></div>`);
define('desktop-screen','<style>:host{display:block;width:1366px;height:768px;background:#3b3b3b}</style><tab-strip></tab-strip><tool-bar></tool-bar><web-page></web-page><task-bar></task-bar>');
</script>
</body>
</html>
